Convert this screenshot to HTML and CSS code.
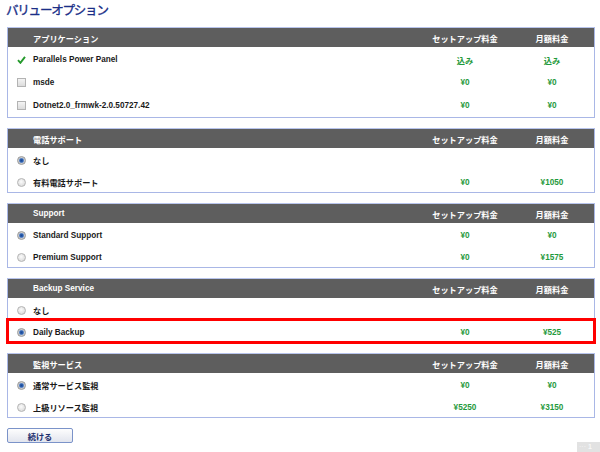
FILE: index.html
```html
<!DOCTYPE html>
<html lang="ja">
<head>
  <meta charset="UTF-8">
  <meta name="viewport" content="width=device-width, initial-scale=1">
  <title>バリューオプション</title>
  <link rel="stylesheet" href="styles.css">
</head>
<body>
  <h1 class="page-title">バリューオプション</h1>

  <form class="options">
    <!-- applications -->
    <div class="opt-table apps">
      <div class="opt-head"><span></span><span class="name">アプリケーション</span><span class="fee">セットアップ料金</span><span class="fee">月額料金</span></div>
      <div class="opt-row">
        <span class="mark"><svg class="tick" width="9" height="8" viewBox="0 0 9 8"><path d="M1 4.2 L3.4 6.8 L8 0.8" fill="none" stroke="#259a2c" stroke-width="1.9"/></svg></span>
        <span class="name">Parallels Power Panel</span><span class="fee">込み</span><span class="fee">込み</span>
      </div>
      <div class="opt-row"><span class="mark"><i class="checkbox"></i></span><span class="name">msde</span><span class="fee">¥0</span><span class="fee">¥0</span></div>
      <div class="opt-row"><span class="mark"><i class="checkbox"></i></span><span class="name">Dotnet2.0_frmwk-2.0.50727.42</span><span class="fee">¥0</span><span class="fee">¥0</span></div>
    </div>

    <div class="opt-table">
      <div class="opt-head"><span></span><span class="name">電話サポート</span><span class="fee">セットアップ料金</span><span class="fee">月額料金</span></div>
      <div class="opt-row"><span class="mark"><i class="radio on"></i></span><span class="name">なし</span><span class="fee"></span><span class="fee"></span></div>
      <div class="opt-row"><span class="mark"><i class="radio"></i></span><span class="name">有料電話サポート</span><span class="fee">¥0</span><span class="fee">¥1050</span></div>
    </div>

    <div class="opt-table">
      <div class="opt-head"><span></span><span class="name">Support</span><span class="fee">セットアップ料金</span><span class="fee">月額料金</span></div>
      <div class="opt-row"><span class="mark"><i class="radio on"></i></span><span class="name">Standard Support</span><span class="fee">¥0</span><span class="fee">¥0</span></div>
      <div class="opt-row"><span class="mark"><i class="radio"></i></span><span class="name">Premium Support</span><span class="fee">¥0</span><span class="fee">¥1575</span></div>
    </div>

    <div class="opt-table">
      <div class="opt-head"><span></span><span class="name">Backup Service</span><span class="fee">セットアップ料金</span><span class="fee">月額料金</span></div>
      <div class="opt-row"><span class="mark"><i class="radio"></i></span><span class="name">なし</span><span class="fee"></span><span class="fee"></span></div>
      <div class="opt-row picked"><span class="mark"><i class="radio on"></i></span><span class="name">Daily Backup</span><span class="fee">¥0</span><span class="fee">¥525</span></div>
    </div>

    <div class="opt-table">
      <div class="opt-head"><span></span><span class="name">監視サービス</span><span class="fee">セットアップ料金</span><span class="fee">月額料金</span></div>
      <div class="opt-row"><span class="mark"><i class="radio on"></i></span><span class="name">通常サービス監視</span><span class="fee">¥0</span><span class="fee">¥0</span></div>
      <div class="opt-row"><span class="mark"><i class="radio"></i></span><span class="name">上級リソース監視</span><span class="fee">¥5250</span><span class="fee">¥3150</span></div>
    </div>

    <button type="button" class="next">続ける</button>
  </form>

  <div class="corner-tab">··· <b>1</b></div>
</body>
</html>
```

FILE: styles.css
```css
body { margin: 0; font-family: "Liberation Sans", "Noto Sans CJK JP", sans-serif; background: #fff; color: #1a1a1a; }
.page-title { margin: 0 0 7px; padding: 2px 6px 0; height: 18px; line-height: 16px; font-size: 12.5px; font-weight: normal;
  letter-spacing: -1.2px; color: #1b2f88; font-family: "Noto Sans CJK JP", sans-serif; -webkit-text-stroke: 0.35px #1b2f88; }

.options { padding: 0 5px 0 7px; }
.opt-table { border: 1px solid #a9b7e6; border-top-color: #b8c4ec; margin-bottom: 10px; font-size: 8.2px; font-weight: bold; }
.apps { padding-bottom: 1px; }
.opt-head, .opt-row { display: grid; grid-template-columns: 25px 1fr 90px 84px; align-items: center; box-sizing: border-box; }
.opt-head { height: 19px; background: #5e5e5e; color: #fff; }
.opt-row { height: 22px; padding-top: 2px; }
.apps .opt-row { height: 23px; }
.fee { text-align: center; }
.opt-row .fee { color: #1f9a3c; }
.mark { display: flex; justify-content: center; padding-left: 1px; }

.checkbox { display: block; width: 9px; height: 9px; box-sizing: border-box; border: 1px solid #b3b3b3;
  background: linear-gradient(#f4f4f4, #dcdcdc); }
.radio { display: block; width: 9px; height: 9px; box-sizing: border-box; border-radius: 50%; border: 1px solid #b4b4b4;
  background: radial-gradient(circle at 45% 40%, #fbfbfb, #d2d2d2); }
.radio.on { border-color: #9a9a9a; background: radial-gradient(circle at 50% 50%, #1a4896 0, #2f62b0 1.6px, #86a3d0 2.4px, #cccccc 3px); }

.picked { position: relative; outline: 3px solid #f00; outline-offset: -1px; }

.next { display: block; margin-top: 2px; width: 66px; height: 15px; padding: 0; border: 1px solid #7b93c9; border-radius: 2px;
  background: linear-gradient(#fdfdfd, #e2e5ee); color: #1c2f6e; font: bold 8.2px "Liberation Sans", "Noto Sans CJK JP", sans-serif; }

.corner-tab { position: absolute; right: 0; bottom: 0; width: 23px; height: 10px; background: #e2e2e2; color: #f8f8f8;
  font-size: 7px; line-height: 10px; padding-left: 2px; box-sizing: border-box; overflow: hidden; }
```
